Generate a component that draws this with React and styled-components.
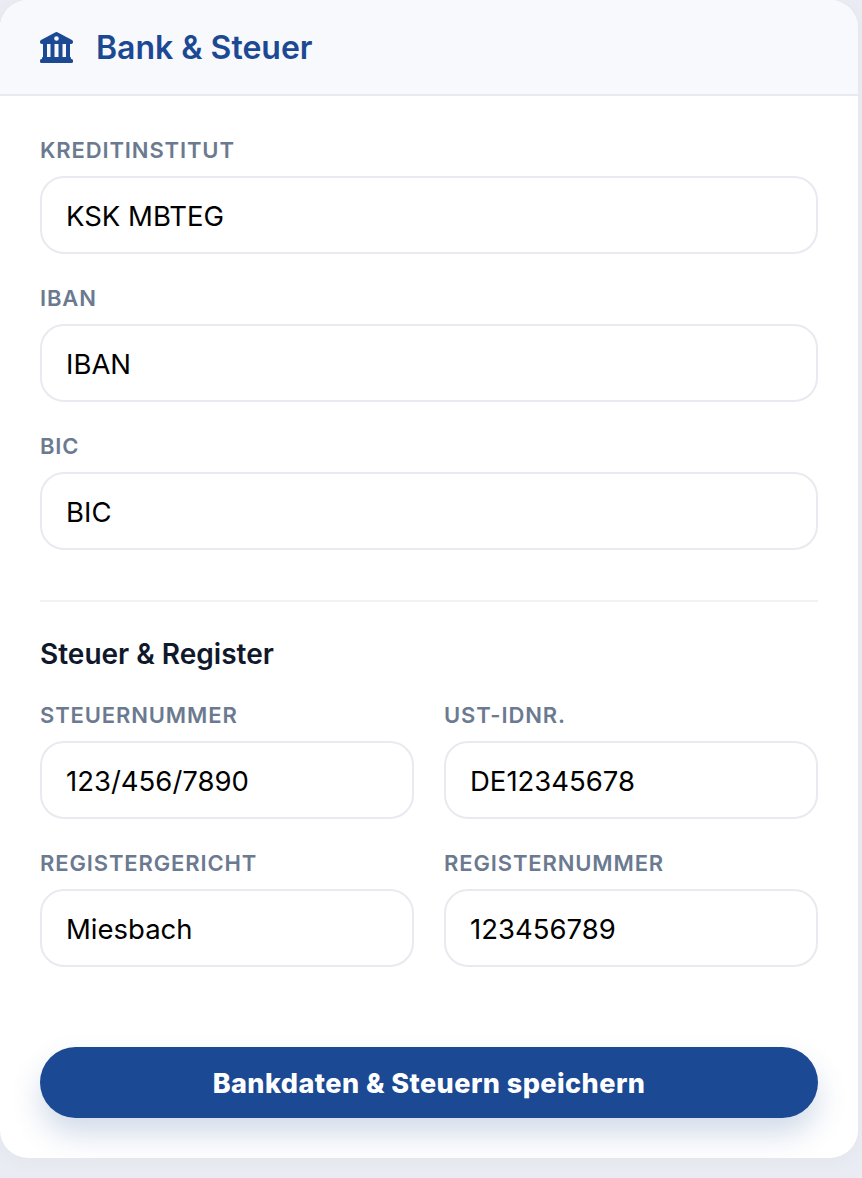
import React from "react";
import styled, { createGlobalStyle } from "styled-components";

const GlobalStyle = createGlobalStyle`
  * {
    box-sizing: border-box;
  }
  body {
    margin: 0;
    background: #e9ecf2;
    font-family: Inter, "Liberation Sans", sans-serif;
  }
`;

const bankFields = [
  { id: "bank", label: "Kreditinstitut", value: "KSK MBTEG" },
  { id: "iban", label: "IBAN", value: "IBAN" },
  { id: "bic", label: "BIC", value: "BIC" },
];

const taxFields = [
  { id: "tax", label: "Steuernummer", value: "123/456/7890" },
  { id: "vat", label: "USt-IdNr.", value: "DE12345678" },
  { id: "court", label: "Registergericht", value: "Miesbach" },
  { id: "reg", label: "Registernummer", value: "123456789" },
];

const BankIcon = () => (
  <svg width="33" height="31" viewBox="0 0 33 31" fill="#1c4993">
    <path
      fillRule="evenodd"
      d="M15.6.3a2 2 0 0 1 1.8 0l14.6 7.6c.6.3 1 .9 1 1.6v.7a1.8 1.8 0 0 1-1.8 1.8H1.8A1.8 1.8 0 0 1 0 10.2v-.7c0-.7.4-1.3 1-1.6L15.6.3zM16.5 4.200a2.300 2.300 0 1 0 0 4.600 2.300 2.300 0 0 0 0-4.600z"
    />
    <path d="M3 12h4v13H3zM10.500 12h4v13h-4zM18.500 12h4v13h-4zM26 12h4v13h-4z" />
    <path d="M3 25h27a1 1 0 0 1 1 1v1H2v-1a1 1 0 0 1 1-1z" />
    <path d="M1.500 27h30a1.500 1.500 0 0 1 1.500 1.500v1a1.500 1.500 0 0 1-1.500 1.500h-30A1.500 1.500 0 0 1 0 29.500v-1A1.500 1.500 0 0 1 1.500 27z" />
  </svg>
);

const Field = ({ item }) => (
  <FieldWrapper>
    <Label htmlFor={item.id}>{item.label}</Label>
    <Input id={item.id} defaultValue={item.value} />
  </FieldWrapper>
);

const App = () => {
  return (
    <Page>
      <GlobalStyle />
      <Card>
        <Header>
          <BankIcon />
          <Title>Bank &amp; Steuer</Title>
        </Header>
        <Body>
          <Stack>
            {bankFields.map((item) => (
              <Field key={item.id} item={item} />
            ))}
          </Stack>
          <Divider />
          <SectionTitle>Steuer &amp; Register</SectionTitle>
          <Grid>
            {taxFields.map((item) => (
              <Field key={item.id} item={item} />
            ))}
          </Grid>
          <SaveButton>Bankdaten &amp; Steuern speichern</SaveButton>
        </Body>
      </Card>
    </Page>
  );
};

const Page = styled.div`
  width: 862px;
  height: 1178px;
  padding: 0 4px 20px 0;
  overflow: hidden;
`;

const Card = styled.div`
  height: 1158px;
  background: #fff;
  border-radius: 28px;
  overflow: hidden;
  box-shadow: 0 4px 20px rgba(0, 0, 0, 0.03);
`;

const Header = styled.div`
  height: 96px;
  display: flex;
  align-items: center;
  gap: 23px;
  padding: 0 40px;
  background: #f8f9fc;
  border-bottom: 2px solid #e8eaf1;
`;

const Title = styled.h2`
  margin: 0;
  font-size: 32px;
  font-weight: 600;
  color: #1c4993;
`;

const Body = styled.div`
  display: flex;
  flex-direction: column;
  padding: 40px 40px 0;
`;

const Stack = styled.div`
  display: flex;
  flex-direction: column;
  gap: 30px;
`;

const FieldWrapper = styled.div`
  display: flex;
  flex-direction: column;
  gap: 12px;
`;

const Label = styled.label`
  font-size: 22px;
  line-height: 28px;
  font-weight: 600;
  letter-spacing: 0.87px;
  text-transform: uppercase;
  color: #6b7a90;
`;

const Input = styled.input`
  width: 100%;
  height: 78px;
  padding: 2px 24px 0;
  border: 2px solid #e8eaf0;
  border-radius: 24px;
  background: #fff;
  font-family: inherit;
  font-size: 27.5px;
  color: #000;
  outline: none;
`;

const Divider = styled.hr`
  width: 100%;
  height: 2px;
  margin: 50px 0 34px;
  border: 0;
  background: #f0f1f5;
`;

const SectionTitle = styled.h3`
  margin: 0 0 29px;
  font-size: 28px;
  line-height: 36px;
  font-weight: 600;
  color: #10182b;
`;

const Grid = styled.div`
  display: grid;
  grid-template-columns: 1fr 1fr;
  column-gap: 30px;
  row-gap: 30px;
`;

const SaveButton = styled.button`
  height: 71px;
  margin-top: 80px;
  padding: 2px 0 0;
  border: 0;
  border-radius: 36px;
  background: #1c4993;
  font-family: inherit;
  font-size: 27px;
  font-weight: 800;
  letter-spacing: 0.45px;
  color: #fff;
  box-shadow: 0 16px 30px rgba(28, 73, 147, 0.2);
`;

export default App;
